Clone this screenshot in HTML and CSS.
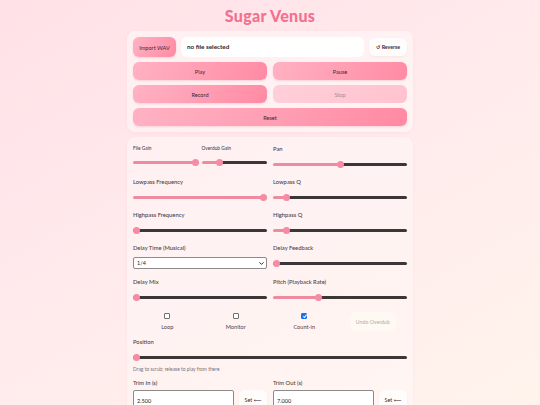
FILE: index.html
```html
<!DOCTYPE html>
<html lang="en">
<head>
<meta charset="utf-8">
<title>Sugar Venus</title>
<link rel="stylesheet" href="styles.css">
</head>
<body>
<main class="app">
  <h1 class="title">Sugar Venus</h1>

  <section class="card transport">
    <div class="file-row">
      <button class="btn btn-pink import">Import WAV</button>
      <div class="file-name">no file selected</div>
      <button class="btn btn-light reverse">↺ Reverse</button>
    </div>
    <div class="pair">
      <button class="btn btn-pink">Play</button>
      <button class="btn btn-pink">Pause</button>
    </div>
    <div class="pair">
      <button class="btn btn-pink">Record</button>
      <button class="btn btn-pink disabled">Stop</button>
    </div>
    <button class="btn btn-pink wide">Reset</button>
  </section>

  <section class="card controls">
    <div class="grid">
      <div class="sub-grid">
        <div class="field">
          <label class="label small">File Gain</label>
          <input type="range" class="slider" value="100" style="--v:100%">
        </div>
        <div class="field">
          <label class="label small">Overdub Gain</label>
          <input type="range" class="slider" value="25" style="--v:25%">
        </div>
      </div>
      <div class="field">
        <label class="label pan">Pan</label>
        <input type="range" class="slider" value="50" style="--v:50%">
      </div>

      <div class="field">
        <label class="label">Lowpass Frequency</label>
        <input type="range" class="slider" value="100" style="--v:100%">
      </div>
      <div class="field">
        <label class="label">Lowpass Q</label>
        <input type="range" class="slider" value="8" style="--v:9%">
      </div>

      <div class="field">
        <label class="label">Highpass Frequency</label>
        <input type="range" class="slider" value="0" style="--v:0%">
      </div>
      <div class="field">
        <label class="label">Highpass Q</label>
        <input type="range" class="slider" value="8" style="--v:9%">
      </div>

      <div class="field">
        <label class="label sel-label">Delay Time (Musical)</label>
        <div class="select-wrap">
          <select class="select">
            <option>1/4</option>
            <option>1/8</option>
            <option>1/16</option>
          </select>
          <svg class="chev" viewBox="0 0 8 5" width="5" height="3" aria-hidden="true"><path d="M1 1 L4 4 L7 1" fill="none" stroke="#222" stroke-width="1.6" stroke-linecap="round" stroke-linejoin="round"/></svg>
        </div>
      </div>
      <div class="field">
        <label class="label fb-label">Delay Feedback</label>
        <input type="range" class="slider" value="0" style="--v:0%">
      </div>

      <div class="field">
        <label class="label">Delay Mix</label>
        <input type="range" class="slider" value="0" style="--v:0%">
      </div>
      <div class="field">
        <label class="label">Pitch (Playback Rate)</label>
        <input type="range" class="slider" value="33" style="--v:33%">
      </div>
    </div>

    <div class="toggles">
      <label class="toggle"><input type="checkbox" class="check"><span>Loop</span></label>
      <label class="toggle"><input type="checkbox" class="check"><span>Monitor</span></label>
      <label class="toggle"><input type="checkbox" class="check" checked><span>Count-in</span></label>
      <div class="toggle"><button class="btn btn-ghost">Undo Overdub</button></div>
    </div>

    <div class="field full">
      <label class="label">Position</label>
      <input type="range" class="slider" value="0" style="--v:0%">
    </div>
    <p class="hint">Drag to scrub; release to play from there</p>

    <div class="grid trims">
      <div class="field">
        <label class="label trim-label">Trim In (s)</label>
        <div class="trim-row">
          <input type="text" class="num" value="2.500">
          <button class="btn btn-light set">Set ⟵</button>
        </div>
      </div>
      <div class="field">
        <label class="label trim-label">Trim Out (s)</label>
        <div class="trim-row">
          <input type="text" class="num" value="7.000">
          <button class="btn btn-light set">Set ⟵</button>
        </div>
      </div>
    </div>
  </section>
</main>
</body>
</html>
```

FILE: styles.css
```css
* { box-sizing: border-box; }

html, body {
  margin: 0;
  padding: 0;
}

body {
  min-height: 405px;
  background: linear-gradient(150deg, #ffe1e7 0%, #ffeaec 45%, #fff4ec 100%);
  font-family: "Lato", "Open Sans", "DejaVu Sans", sans-serif;
  color: #3b3034;
  overflow: hidden;
}

.app {
  width: 286px;
  margin: 0 auto;
  padding-top: 6px;
}

.title {
  margin: 0 0 5px;
  text-align: center;
  font-size: 16px;
  line-height: 20px;
  font-weight: 900;
  color: #f2718f;
  letter-spacing: 0.3px;
}

.card {
  background: rgba(255, 248, 249, 0.6);
  border-radius: 8px;
  padding: 6px;
  box-shadow: 0 1px 3px rgba(240, 150, 170, 0.12);
}

.transport {
  display: flex;
  flex-direction: column;
  gap: 5px;
}

.file-row {
  display: flex;
  gap: 5px;
  align-items: center;
  height: 20px;
}

.btn {
  border: none;
  font-family: inherit;
  font-size: 5.6px;
  color: #3b2a30;
  cursor: pointer;
  padding: 0;
}

.btn-pink {
  background: linear-gradient(120deg, #ffb2c3 0%, #ff9db3 55%, #ff8aa3 100%);
  border-radius: 6px;
  height: 18px;
  box-shadow: 0 1px 2px rgba(230, 120, 145, 0.25);
}

.btn-pink.disabled {
  background: linear-gradient(120deg, #ffcfd9 0%, #ffc3cf 100%);
  color: #a98a92;
  box-shadow: none;
}

.import {
  width: 43px;
  height: 20px;
  flex: none;
}

.file-name {
  flex: 1;
  height: 20px;
  background: #ffffff;
  border-radius: 6px;
  font-size: 6.3px;
  font-weight: 700;
  line-height: 20px;
  padding-left: 6px;
  color: #2d2428;
}

.btn-light {
  background: rgba(255, 255, 255, 0.75);
  border-radius: 6px;
  box-shadow: 0 1px 2px rgba(230, 150, 165, 0.15);
}

.reverse {
  width: 38px;
  height: 18px;
  flex: none;
  font-weight: 700;
  font-size: 5.2px;
}

.pair {
  display: grid;
  grid-template-columns: 1fr 1fr;
  gap: 6px;
}

.wide {
  width: 100%;
}

.controls {
  margin-top: 5px;
  padding-top: 7px;
  background: rgba(255, 248, 247, 0.55);
}

.grid {
  display: grid;
  grid-template-columns: 1fr 1fr;
  column-gap: 6px;
  row-gap: 9px;
}

.sub-grid {
  display: grid;
  grid-template-columns: 1fr 1fr;
  gap: 3px;
}

.field {
  display: flex;
  flex-direction: column;
}

.label {
  font-size: 5.8px;
  line-height: 8px;
  color: #4a3f43;
  margin-bottom: 6px;
  font-weight: 500;
}

.label.small {
  font-size: 4.8px;
  margin-bottom: 5px;
}

.label.pan {
  margin-top: 1px;
  margin-bottom: 6px;
}

.label.sel-label {
  margin-bottom: 5px;
}

.label.fb-label {
  margin-bottom: 6px;
}

.slider {
  -webkit-appearance: none;
  appearance: none;
  width: 100%;
  height: 10px;
  margin: 0;
  background: transparent;
}

.slider::-webkit-slider-runnable-track {
  height: 3px;
  border-radius: 2px;
  background: linear-gradient(to right, #ef8ba1 var(--v), #3b3738 var(--v));
}

.slider::-webkit-slider-thumb {
  -webkit-appearance: none;
  appearance: none;
  width: 7px;
  height: 7px;
  border-radius: 50%;
  background: #f68ba3;
  margin-top: -2px;
  border: none;
}

.select-wrap {
  position: relative;
  height: 12px;
}

.select {
  -webkit-appearance: none;
  appearance: none;
  display: block;
  height: 12px;
  width: 100%;
  font-family: inherit;
  font-size: 5.5px;
  border: 1px solid #8e8a8b;
  border-radius: 2px;
  background: #ffffff;
  color: #222;
  padding: 0 3px;
  margin: 0;
}

.chev {
  position: absolute;
  right: 3px;
  top: 4.5px;
  pointer-events: none;
}

.toggles {
  display: grid;
  grid-template-columns: repeat(4, 1fr);
  margin-top: 10px;
  align-items: center;
}

.toggle {
  display: flex;
  flex-direction: column;
  align-items: center;
  gap: 4px;
  font-size: 5.6px;
  line-height: 8px;
  color: #4a3f43;
}

.check {
  -webkit-appearance: none;
  appearance: none;
  position: relative;
  width: 6px;
  height: 6px;
  margin: 0;
  border: 0.8px solid #6f6f6f;
  border-radius: 1px;
  background: #fff;
}

.check:checked {
  background: #1a73e8;
  border-color: #1a73e8;
}

.check:checked::after {
  content: "";
  position: absolute;
  left: 1.6px;
  top: 0.3px;
  width: 1.4px;
  height: 3px;
  border: solid #fff;
  border-width: 0 0.9px 0.9px 0;
  transform: rotate(40deg);
}

.btn-ghost {
  background: rgba(255, 250, 244, 0.9);
  border-radius: 6px;
  color: #b3aaa8;
  font-size: 5.2px;
  height: 19px;
  padding: 0 6px;
}

.full {
  margin-top: 7px;
}

.hint {
  margin: 4px 0 7px;
  font-size: 4.9px;
  line-height: 6px;
  color: #7a7073;
}

.trims {
  row-gap: 0;
}

.label.trim-label {
  margin-bottom: 3px;
}

.trim-row {
  display: flex;
  gap: 5px;
  align-items: center;
}

.num {
  flex: 1;
  min-width: 0;
  height: 20px;
  border: 1px solid #8e8a8b;
  border-radius: 2px;
  background: #fff;
  font-family: inherit;
  font-size: 5.6px;
  padding: 0 3px;
  color: #222;
}

.set {
  width: 28px;
  height: 20px;
  flex: none;
  font-size: 5.4px;
}
```
